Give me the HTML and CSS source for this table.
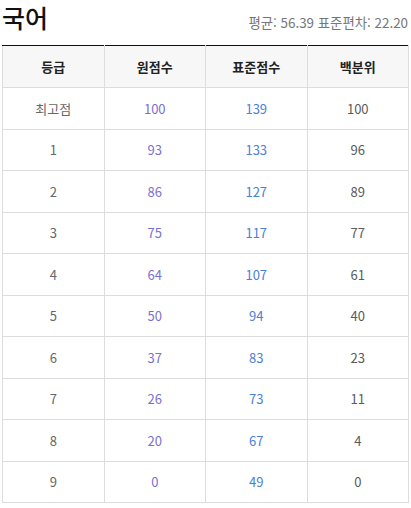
FILE: index.html
```html
<!DOCTYPE html>
<html lang="ko">
<head>
<meta charset="utf-8">
<link rel="stylesheet" href="styles.css">
</head>
<body>
<div class="wrap">
  <div class="head">
    <h1 class="title">국어</h1>
    <div class="stats">평균: 56.39 표준편차: 22.20</div>
  </div>
  <table class="grades">
    <thead>
      <tr><th>등급</th><th>원점수</th><th>표준점수</th><th>백분위</th></tr>
    </thead>
    <tbody>
      <tr><td class="g">최고점</td><td class="raw">100</td><td class="std">139</td><td class="pct">100</td></tr>
      <tr><td class="g">1</td><td class="raw">93</td><td class="std">133</td><td class="pct">96</td></tr>
      <tr><td class="g">2</td><td class="raw">86</td><td class="std">127</td><td class="pct">89</td></tr>
      <tr><td class="g">3</td><td class="raw">75</td><td class="std">117</td><td class="pct">77</td></tr>
      <tr><td class="g">4</td><td class="raw">64</td><td class="std">107</td><td class="pct">61</td></tr>
      <tr><td class="g">5</td><td class="raw">50</td><td class="std">94</td><td class="pct">40</td></tr>
      <tr><td class="g">6</td><td class="raw">37</td><td class="std">83</td><td class="pct">23</td></tr>
      <tr><td class="g">7</td><td class="raw">26</td><td class="std">73</td><td class="pct">11</td></tr>
      <tr><td class="g">8</td><td class="raw">20</td><td class="std">67</td><td class="pct">4</td></tr>
      <tr><td class="g">9</td><td class="raw">0</td><td class="std">49</td><td class="pct">0</td></tr>
    </tbody>
  </table>
</div>
</body>
</html>
```
FILE: styles.css
```css
html, body {
  margin: 0;
  padding: 0;
  background: #fff;
}
body {
  font-family: "Noto Sans CJK KR", "Noto Sans", sans-serif;
  color: #555;
}
.wrap {
  padding: 0 2px;
}
.head {
  display: flex;
  justify-content: space-between;
  align-items: baseline;
  height: 45px;
}
.title {
  margin: 0;
  font-size: 25px;
  font-weight: 500;
  color: #111;
  line-height: 34px;
}
.stats {
  font-size: 13.4px;
  color: #777;
  padding-right: 1px;
}
.grades {
  width: 407px;
  border-collapse: collapse;
  table-layout: fixed;
  border-top: 1px solid #111;
}
.grades th, .grades td {
  border: 1px solid #ddd;
  text-align: center;
  font-size: 13px;
  padding: 0;
}
.grades thead tr:first-child th {
  border-top: 1px solid #111;
}
.grades th {
  background: #f7f7f7;
  color: #222;
  font-weight: 700;
  height: 41px;
}
.grades td {
  height: 40.5px;
}
.g { color: #666; }
.raw { color: #7b70d2; }
.std { color: #4a80d8; }
.pct { color: #5a5a5a; }
```
